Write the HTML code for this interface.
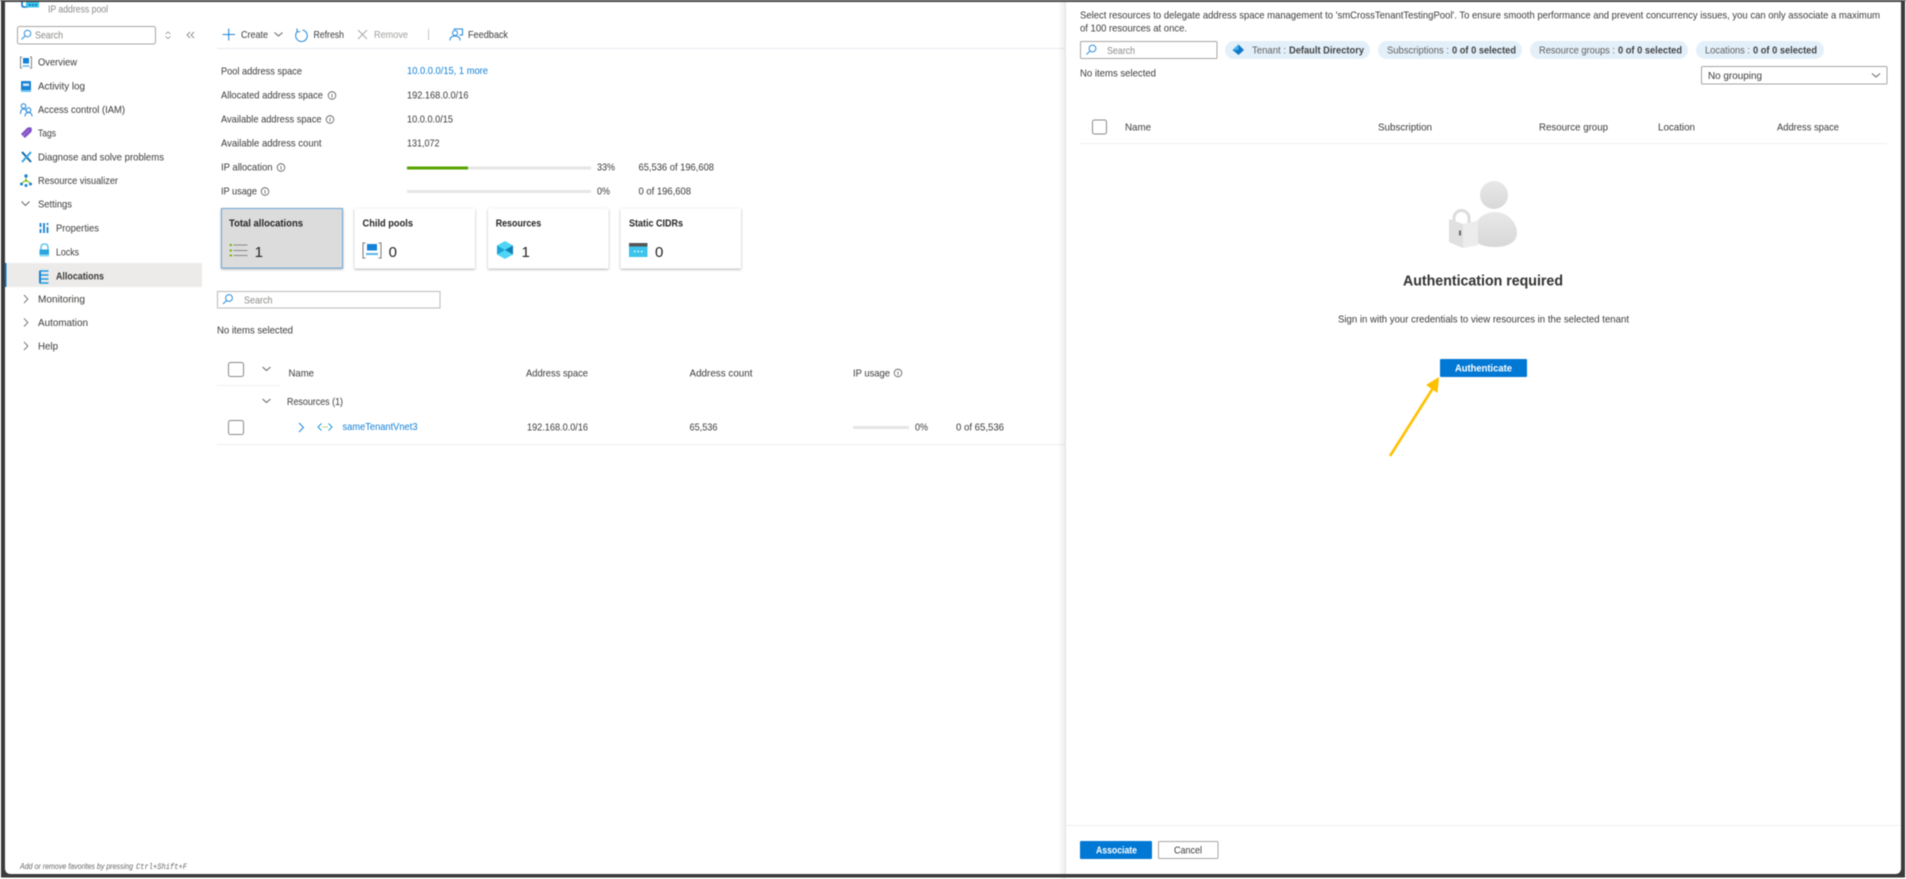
<!DOCTYPE html>
<html lang="en"><head><meta charset="utf-8"><title>IP address pool - Allocations</title>
<style>
html,body{margin:0;padding:0;background:#fff;width:1906px;height:879px;overflow:hidden}
svg{display:block;filter:blur(.5px)}
text{font-family:"Liberation Sans",sans-serif;font-size:10.2px;fill:#3b3a39;white-space:pre}
.g{fill:#8a8886}.b{fill:#0f7fd6}.s{font-weight:bold}.w{fill:#fff;font-weight:bold}
.ic{fill:none;stroke:#5c5a58;stroke-width:.8}
.chev{fill:none;stroke:#605e5c;stroke-width:.9}
.bl{fill:none;stroke:#1f86d8;stroke-width:1}
</style></head><body>
<svg width="1906" height="879" viewBox="0 0 1906 879" xmlns="http://www.w3.org/2000/svg">
<defs>
<filter id="sh" x="-10%" y="-10%" width="120%" height="125%"><feDropShadow dx="0" dy="1" stdDeviation="1.2" flood-color="#000" flood-opacity=".3"/></filter>
<linearGradient id="pg" x1="0" y1="0" x2="0" y2="1"><stop offset="0" stop-color="#e8e8e8"/><stop offset="1" stop-color="#d8d8d8"/></linearGradient>
<linearGradient id="ps" x1="0" y1="0" x2="1" y2="0"><stop offset="0" stop-color="#000" stop-opacity="0"/><stop offset="1" stop-color="#000" stop-opacity=".07"/></linearGradient>
</defs>
<rect width="1906" height="879" fill="#fff"/>

<!-- blade header -->
<path d="M22 0v5q0 2 2 2h4" fill="none" stroke="#0f78c8" stroke-width="1.6"/>
<rect x="26" y="2" width="13" height="5.5" fill="#3cc4ec"/>
<path d="M29 5h1.6M32 5h1.6M35 5h1.6" stroke="#0b5fa8" stroke-width="1.6"/>
<text x="48" y="12.5" class="g" textLength="60" lengthAdjust="spacingAndGlyphs">IP address pool</text>

<!-- sidebar search -->
<rect x="17.5" y="26.5" width="138" height="17.5" rx="2" fill="#fff" stroke="#a8a6a4"/>
<circle cx="27.5" cy="33.5" r="3.3" fill="none" stroke="#2f8fdc"/><path d="M25 36l-3.5 3.5" stroke="#2f8fdc"/>
<text x="35" y="38.5" class="g" textLength="28" lengthAdjust="spacingAndGlyphs">Search</text>
<path d="M165.5 34l2.500-2 2.500 2M165.500 36.500l2.500 2 2.500-2" fill="none" stroke="#8a8886" stroke-width=".8"/>
<path d="M190 32l-3 3 3 3M194 32l-3 3 3 3" fill="none" stroke="#8a8886" stroke-width=".9"/>

<!-- sidebar nav -->
<g>
<path d="M22 57h-1.500v11H22M30 57h1.500v11H30" fill="none" stroke="#777" stroke-width=".9"/><rect x="23" y="58" width="6" height="5.500" fill="#1382d8"/><path d="M22.500 66h7" stroke="#59b4e8" stroke-width="1.400"/>
<text x="38" y="65.500" textLength="39" lengthAdjust="spacingAndGlyphs">Overview</text>
<rect x="21" y="81" width="10" height="11" rx="1" fill="#1b82d3"/><rect x="23" y="83.500" width="6" height="2.500" fill="#cfe8fa"/><rect x="21" y="90" width="10" height="2" fill="#6cc3f0"/>
<text x="38" y="89.500" textLength="47" lengthAdjust="spacingAndGlyphs">Activity log</text>
<circle cx="23.500" cy="106" r="2.300" class="bl"/><path d="M20.500 114q0-5 3-5t3 3" class="bl"/><circle cx="28.500" cy="110" r="2.300" class="bl"/><path d="M25 116.500q0-4 3.500-4t3.500 4" class="bl"/>
<text x="38" y="113" textLength="87" lengthAdjust="spacingAndGlyphs">Access control (IAM)</text>
<path d="M21 134l6-6q1-.8 2-.8l2.500.3.300 3q0 1-1 2l-6 5.500z" fill="#7f4fc4"/><path d="M23 136l6-6" stroke="#a77fe0"/>
<text x="38" y="136.500" textLength="18" lengthAdjust="spacingAndGlyphs">Tags</text>
<path d="M22 152l9 10" stroke="#1467a8" stroke-width="2"/><path d="M31 152l-9 10" stroke="#35a5e0" stroke-width="2"/>
<text x="38" y="160.500" textLength="126" lengthAdjust="spacingAndGlyphs">Diagnose and solve problems</text>
<circle cx="26" cy="176" r="1.700" fill="#1b82d3"/><circle cx="21.500" cy="184" r="1.500" fill="#1b82d3"/><circle cx="26" cy="185.500" r="1.500" fill="#1b82d3"/><circle cx="30.500" cy="184" r="1.500" fill="#1b82d3"/><path d="M26 178v4M22 183l4-3 4 3" stroke="#6bb700" fill="none"/>
<text x="38" y="184" textLength="80" lengthAdjust="spacingAndGlyphs">Resource visualizer</text>
<path d="M21.500 201.500l4 4 4-4" class="chev"/>
<text x="38" y="207.500" textLength="34" lengthAdjust="spacingAndGlyphs">Settings</text>
<path d="M40.500 223v4M40.500 229v4M44 223v10M47.500 223v2M47.500 227v6" stroke="#1b82d3" stroke-width="1.800"/>
<text x="56" y="231.500" textLength="43" lengthAdjust="spacingAndGlyphs">Properties</text>
<path d="M41 250v-2.500q0-3.500 3.500-3.500t3.500 3.500v2.500" fill="none" stroke="#48bde8" stroke-width="1.300"/><path d="M39.500 249.500h9.500v7h-9.500z" fill="#2ba5e0"/><path d="M39.500 254.500h9.500v2h-9.500z" fill="#8adcf4"/>
<text x="56" y="255.500" textLength="23" lengthAdjust="spacingAndGlyphs">Locks</text>
<rect x="5" y="263" width="197" height="24" fill="#edebe9"/><rect x="5" y="263" width="1.500" height="24" fill="#0f78d4"/>
<path d="M39.500 271h9M39.500 275h9M39.500 279h9M39.500 283h9" stroke="#1b9be0" stroke-width="1.500"/><path d="M40 271v12" stroke="#1b82d3" stroke-width="2"/>
<text x="56" y="279.500" class="s" textLength="48" lengthAdjust="spacingAndGlyphs">Allocations</text>
<path d="M24 295l3.800 4-3.800 4M24 318.500l3.800 4-3.800 4M24 342l3.800 4-3.800 4" class="chev"/>
<text x="38" y="302.500" textLength="47" lengthAdjust="spacingAndGlyphs">Monitoring</text>
<text x="38" y="326" textLength="50" lengthAdjust="spacingAndGlyphs">Automation</text>
<text x="38" y="349.500" textLength="20" lengthAdjust="spacingAndGlyphs">Help</text>
<text x="20" y="869" class="g" style="font-size:8px;font-style:italic;fill:#666" textLength="113" lengthAdjust="spacingAndGlyphs">Add or remove favorites by pressing</text>
<text x="136" y="869" style="font-size:8px;font-style:italic;font-family:'Liberation Mono',monospace;fill:#666" textLength="51" lengthAdjust="spacingAndGlyphs">Ctrl+Shift+F</text>
</g>

<!-- toolbar -->
<path d="M222.500 34.500h12.500M228.700 28.500v12" stroke="#1b82d3" stroke-width="1"/>
<text x="241" y="38" textLength="27" lengthAdjust="spacingAndGlyphs">Create</text>
<path d="M274.500 32.500l4 3.500 4-3.500" class="chev"/>
<path d="M302.500 30a5.800 5.800 0 1 1-4.800 1.300" class="bl"/><path d="M297 28.500v3.200h3.200" class="bl" stroke-width=".8"/>
<text x="313.500" y="38" textLength="30.500" lengthAdjust="spacingAndGlyphs">Refresh</text>
<path d="M358 30l9 9M367 30l-9 9" stroke="#a8a6a4" stroke-width=".9"/>
<text x="374" y="38" class="g" style="fill:#a19f9d" textLength="34" lengthAdjust="spacingAndGlyphs">Remove</text>
<path d="M428.500 29v11" stroke="#c8c6c4"/>
<circle cx="455" cy="33" r="2.500" class="bl" stroke-width=".9"/><path d="M450 40.500q0-4.500 5-4.500t5 4.500M453.500 29h9v6h-3" class="bl" stroke-width=".9"/>
<text x="468" y="38" textLength="40" lengthAdjust="spacingAndGlyphs">Feedback</text>
<rect x="217" y="48" width="848" height="1" fill="#e6ebf0"/>

<!-- essentials -->
<text x="221" y="74.500" textLength="81" lengthAdjust="spacingAndGlyphs">Pool address space</text>
<text x="221" y="98.500" textLength="102" lengthAdjust="spacingAndGlyphs">Allocated address space</text>
<text x="221" y="122.500" textLength="100.500" lengthAdjust="spacingAndGlyphs">Available address space</text>
<text x="221" y="146.500" textLength="100.500" lengthAdjust="spacingAndGlyphs">Available address count</text>
<text x="221" y="170.500" textLength="51.500" lengthAdjust="spacingAndGlyphs">IP allocation</text>
<text x="221" y="194.500" textLength="36" lengthAdjust="spacingAndGlyphs">IP usage</text>
<g class="ic"><circle cx="332" cy="95.500" r="3.800"/><circle cx="330" cy="119.500" r="3.800"/><circle cx="281" cy="167.500" r="3.800"/><circle cx="265" cy="191.500" r="3.800"/><circle cx="898" cy="373" r="3.800"/>
<path d="M332 94v3.500M330 118v3.500M281 166v3.500M265 190v3.500M898 371.500v3.500"/></g>
<text x="407" y="74" class="b" textLength="81" lengthAdjust="spacingAndGlyphs">10.0.0.0/15, 1 more</text>
<text x="407" y="98.500" textLength="61.500" lengthAdjust="spacingAndGlyphs">192.168.0.0/16</text>
<text x="407" y="122.500" textLength="46" lengthAdjust="spacingAndGlyphs">10.0.0.0/15</text>
<text x="407" y="146.500" textLength="32.500" lengthAdjust="spacingAndGlyphs">131,072</text>
<rect x="407" y="166.500" width="184" height="3" fill="#e6e6e6"/><rect x="407" y="166.500" width="61" height="3" fill="#57a300"/>
<text x="597" y="170.500" textLength="18" lengthAdjust="spacingAndGlyphs">33%</text>
<text x="638.500" y="170.500" textLength="75.500" lengthAdjust="spacingAndGlyphs">65,536 of 196,608</text>
<rect x="407" y="190" width="184" height="3" fill="#e6e6e6"/>
<text x="597" y="194.500" textLength="13" lengthAdjust="spacingAndGlyphs">0%</text>
<text x="638.500" y="194.500" textLength="52.500" lengthAdjust="spacingAndGlyphs">0 of 196,608</text>

<!-- cards -->
<rect x="221.500" y="208.500" width="121" height="59.500" fill="#dcdcdc" stroke="#6ea8d8" filter="url(#sh)"/>
<rect x="354.500" y="208.500" width="120.500" height="60" fill="#fff" filter="url(#sh)"/>
<rect x="488" y="208.500" width="120.500" height="60" fill="#fff" filter="url(#sh)"/>
<rect x="620.500" y="208.500" width="120.500" height="60" fill="#fff" filter="url(#sh)"/>
<text x="229" y="226.500" class="s" style="fill:#252423" textLength="74" lengthAdjust="spacingAndGlyphs">Total allocations</text>
<text x="362.500" y="226.500" class="s" style="fill:#252423" textLength="50.500" lengthAdjust="spacingAndGlyphs">Child pools</text>
<text x="495.700" y="226.500" class="s" style="fill:#252423" textLength="45.500" lengthAdjust="spacingAndGlyphs">Resources</text>
<text x="629" y="226.500" class="s" style="fill:#252423" textLength="54" lengthAdjust="spacingAndGlyphs">Static CIDRs</text>
<path d="M233.500 245h14M233.500 250.500h14M233.500 255.500h14" stroke="#8a8886"/><path d="M229.500 245h2.500M229.500 250.500h2.500M229.500 255.500h2.500" stroke="#6bb700" stroke-width="1.800"/>
<text x="254.600" y="257" style="font-size:15px;fill:#252423">1</text>
<path d="M365.500 243h-2.500v15h2.500M378.500 243h2.500v15h-2.500" fill="none" stroke="#777"/><rect x="367" y="244" width="10" height="6.500" fill="#1382d8"/><path d="M366 254h12" stroke="#59b4e8" stroke-width="2"/>
<text x="388.600" y="257" style="font-size:15px;fill:#252423">0</text>
<path d="M505 241l8 4.500v9l-8 4.500-8-4.500v-9z" fill="#50d5f5"/><path d="M505 250l-8-4.500 0 9z" fill="#1aa3d8"/><path d="M505 250l8-4.500v9z" fill="#0f7fb8"/>
<text x="521.500" y="257" style="font-size:15px;fill:#252423">1</text>
<rect x="629" y="243" width="18.500" height="14" fill="#3cc4ec"/><rect x="629" y="243" width="18.500" height="3.500" fill="#555"/><path d="M634 251.500h1.500M637.500 251.500h1.500M641 251.500h1.500" stroke="#fff" stroke-width="1.500"/>
<text x="655" y="257" style="font-size:15px;fill:#252423">0</text>

<!-- list search -->
<rect x="217.500" y="291.500" width="222.500" height="16.500" fill="#fff" stroke="#bdbbb9"/>
<circle cx="229" cy="298" r="3.400" fill="none" stroke="#2f8fdc"/><path d="M226.500 300.500l-3.500 3.500" stroke="#2f8fdc"/>
<text x="244" y="303.500" class="g" textLength="28.500" lengthAdjust="spacingAndGlyphs">Search</text>
<text x="217" y="333.500" textLength="76" lengthAdjust="spacingAndGlyphs">No items selected</text>

<!-- list -->
<rect x="228.500" y="362.500" width="15" height="14" rx="2" fill="#fff" stroke="#8a8886"/>
<path d="M262.500 367l4 3.500 4-3.500" class="chev"/>
<text x="288.500" y="376.500" textLength="25.500" lengthAdjust="spacingAndGlyphs">Name</text>
<text x="526" y="376.500" textLength="62" lengthAdjust="spacingAndGlyphs">Address space</text>
<text x="689.500" y="376.500" textLength="63" lengthAdjust="spacingAndGlyphs">Address count</text>
<text x="853" y="376.500" textLength="37" lengthAdjust="spacingAndGlyphs">IP usage</text>
<rect x="217" y="385" width="63" height="1" fill="#f0f0f0"/>
<path d="M262.500 399l4 3.500 4-3.500" class="chev"/>
<text x="287" y="405" textLength="56" lengthAdjust="spacingAndGlyphs">Resources (1)</text>
<rect x="228.500" y="420.500" width="15" height="14" rx="2" fill="#fff" stroke="#8a8886"/>
<path d="M299 423l4.500 4.500-4.500 4.500" class="bl"/>
<path d="M321.500 423.500l-3.500 3.500 3.500 3.500" fill="none" stroke="#1f9ad8"/><path d="M328.500 423.500l3.500 3.500-3.500 3.500" fill="none" stroke="#1f9ad8"/><path d="M322.500 427h1M324.500 427h1M326.500 427h1" stroke="#6bb700"/>
<text x="342.500" y="430" class="b" textLength="75" lengthAdjust="spacingAndGlyphs">sameTenantVnet3</text>
<text x="527" y="430.500" textLength="61" lengthAdjust="spacingAndGlyphs">192.168.0.0/16</text>
<text x="689.500" y="430.500" textLength="28" lengthAdjust="spacingAndGlyphs">65,536</text>
<rect x="853" y="426" width="56" height="3" fill="#e6e6e6"/>
<text x="915" y="430.500" textLength="13" lengthAdjust="spacingAndGlyphs">0%</text>
<text x="956" y="430.500" textLength="48" lengthAdjust="spacingAndGlyphs">0 of 65,536</text>
<rect x="217" y="444" width="848" height="1" fill="#eeeeee"/>

<!-- right panel -->
<rect x="1058" y="0" width="7" height="879" fill="url(#ps)"/>
<rect x="1065" y="0" width="841" height="879" fill="#fff"/>
<rect x="1065" y="0" width="1" height="879" fill="#e4e4e4"/>
<text x="1080" y="18.500" textLength="800" lengthAdjust="spacingAndGlyphs">Select resources to delegate address space management to 'smCrossTenantTestingPool'. To ensure smooth performance and prevent concurrency issues, you can only associate a maximum</text>
<text x="1080" y="31.500" textLength="107" lengthAdjust="spacingAndGlyphs">of 100 resources at once.</text>
<rect x="1080.500" y="41.500" width="136.500" height="17" rx="1" fill="#fff" stroke="#a8a6a4"/>
<circle cx="1092.500" cy="48.500" r="3.400" fill="none" stroke="#2f8fdc"/><path d="M1090 51l-3.500 3.500" stroke="#2f8fdc"/>
<text x="1107" y="54" class="g" textLength="28" lengthAdjust="spacingAndGlyphs">Search</text>

<rect x="1225" y="41" width="145" height="18" rx="9" fill="#e3f0fa"/>
<path d="M1238.500 44.500l5.500 5.500-5.500 5-6-5z" fill="#0f78c8"/><path d="M1238.500 44.500l-6 5.500 6 0z" fill="#45b3e8"/>
<text x="1252" y="53.500" class="g" style="fill:#605e5c" textLength="34" lengthAdjust="spacingAndGlyphs">Tenant :</text>
<text x="1289" y="53.500" class="s" style="fill:#444" textLength="75" lengthAdjust="spacingAndGlyphs">Default Directory</text>
<rect x="1378" y="41" width="144" height="18" rx="9" fill="#e3f0fa"/>
<text x="1387" y="53.500" style="fill:#605e5c" textLength="62" lengthAdjust="spacingAndGlyphs">Subscriptions :</text>
<text x="1452" y="53.500" class="s" style="fill:#444" textLength="64" lengthAdjust="spacingAndGlyphs">0 of 0 selected</text>
<rect x="1530" y="41" width="158" height="18" rx="9" fill="#e3f0fa"/>
<text x="1539" y="53.500" style="fill:#605e5c" textLength="76" lengthAdjust="spacingAndGlyphs">Resource groups :</text>
<text x="1618" y="53.500" class="s" style="fill:#444" textLength="64" lengthAdjust="spacingAndGlyphs">0 of 0 selected</text>
<rect x="1696" y="41" width="128" height="18" rx="9" fill="#e3f0fa"/>
<text x="1705" y="53.500" style="fill:#605e5c" textLength="45" lengthAdjust="spacingAndGlyphs">Locations :</text>
<text x="1753" y="53.500" class="s" style="fill:#444" textLength="64" lengthAdjust="spacingAndGlyphs">0 of 0 selected</text>

<text x="1080" y="76.500" textLength="76" lengthAdjust="spacingAndGlyphs">No items selected</text>
<rect x="1701.500" y="66.500" width="185.500" height="17.500" rx="1" fill="#fff" stroke="#a8a6a4"/>
<text x="1708" y="79" textLength="54" lengthAdjust="spacingAndGlyphs">No grouping</text>
<path d="M1872 73.500l4 3.500 4-3.500" class="chev"/>

<rect x="1092.500" y="120" width="14" height="14" rx="2" fill="#fff" stroke="#8a8886"/>
<text x="1125" y="130.500" textLength="26" lengthAdjust="spacingAndGlyphs">Name</text>
<text x="1378" y="130.500" textLength="54" lengthAdjust="spacingAndGlyphs">Subscription</text>
<text x="1539" y="130.500" textLength="69" lengthAdjust="spacingAndGlyphs">Resource group</text>
<text x="1658" y="130.500" textLength="37" lengthAdjust="spacingAndGlyphs">Location</text>
<text x="1777" y="130.500" textLength="62" lengthAdjust="spacingAndGlyphs">Address space</text>
<rect x="1080" y="143" width="807" height="1" fill="#efefef"/>

<!-- illustration -->
<circle cx="1494" cy="195" r="14" fill="url(#pg)"/>
<path d="M1473 234c0-13 10-22 22-22s22 10 22 21c0 9-9 14-22 14s-22-4-22-13z" fill="url(#pg)"/>
<path d="M1454 224v-6a7.500 7.500 0 0 1 15 0v8" fill="none" stroke="#dcdcdc" stroke-width="3"/>
<path d="M1449 219l13 5 16-3v24l-15 3-14-6z" fill="#e6e6e6"/><path d="M1449 219l14 5v24l-14-6z" fill="#e0e0e0"/><path d="M1463 224l15-3v24l-15 3z" fill="#ececec"/>
<path d="M1460 230.500v5" stroke="#666" stroke-width="2"/>
<text x="1403" y="285.500" style="font-size:14.500px;font-weight:bold;fill:#323130" textLength="160" lengthAdjust="spacingAndGlyphs">Authentication required</text>
<text x="1338" y="322.500" textLength="291" lengthAdjust="spacingAndGlyphs">Sign in with your credentials to view resources in the selected tenant</text>
<rect x="1440" y="359" width="87" height="18" rx="1" fill="#0078d4"/>
<text x="1455" y="371.500" class="w" textLength="57" lengthAdjust="spacingAndGlyphs">Authenticate</text>
<path d="M1390 456l43-68" stroke="#ffc000" stroke-width="2.600" fill="none"/>
<path d="M1439 377l-13 8 11.500 8z" fill="#ffc000"/>

<!-- footer -->
<rect x="1065" y="825" width="836" height="1" fill="#eeeeee"/>
<rect x="1080" y="841" width="72" height="18" rx="1" fill="#0078d4"/>
<text x="1096" y="853.500" class="w" textLength="41" lengthAdjust="spacingAndGlyphs">Associate</text>
<rect x="1158.500" y="841.500" width="59.500" height="17" rx="1" fill="#fff" stroke="#a8a6a4"/>
<text x="1174" y="853.500" textLength="28" lengthAdjust="spacingAndGlyphs">Cancel</text>

<!-- screenshot frame -->
<path fill-rule="evenodd" fill="#3b3b3b" d="M1 0H1905V877.500H1V0ZM5 2V868q0 6 6 6H1895q6 0 6-6V2Z"/>
<rect x="0" y="0" width="1906" height="1" fill="#555"/>
</svg>
</body></html>
